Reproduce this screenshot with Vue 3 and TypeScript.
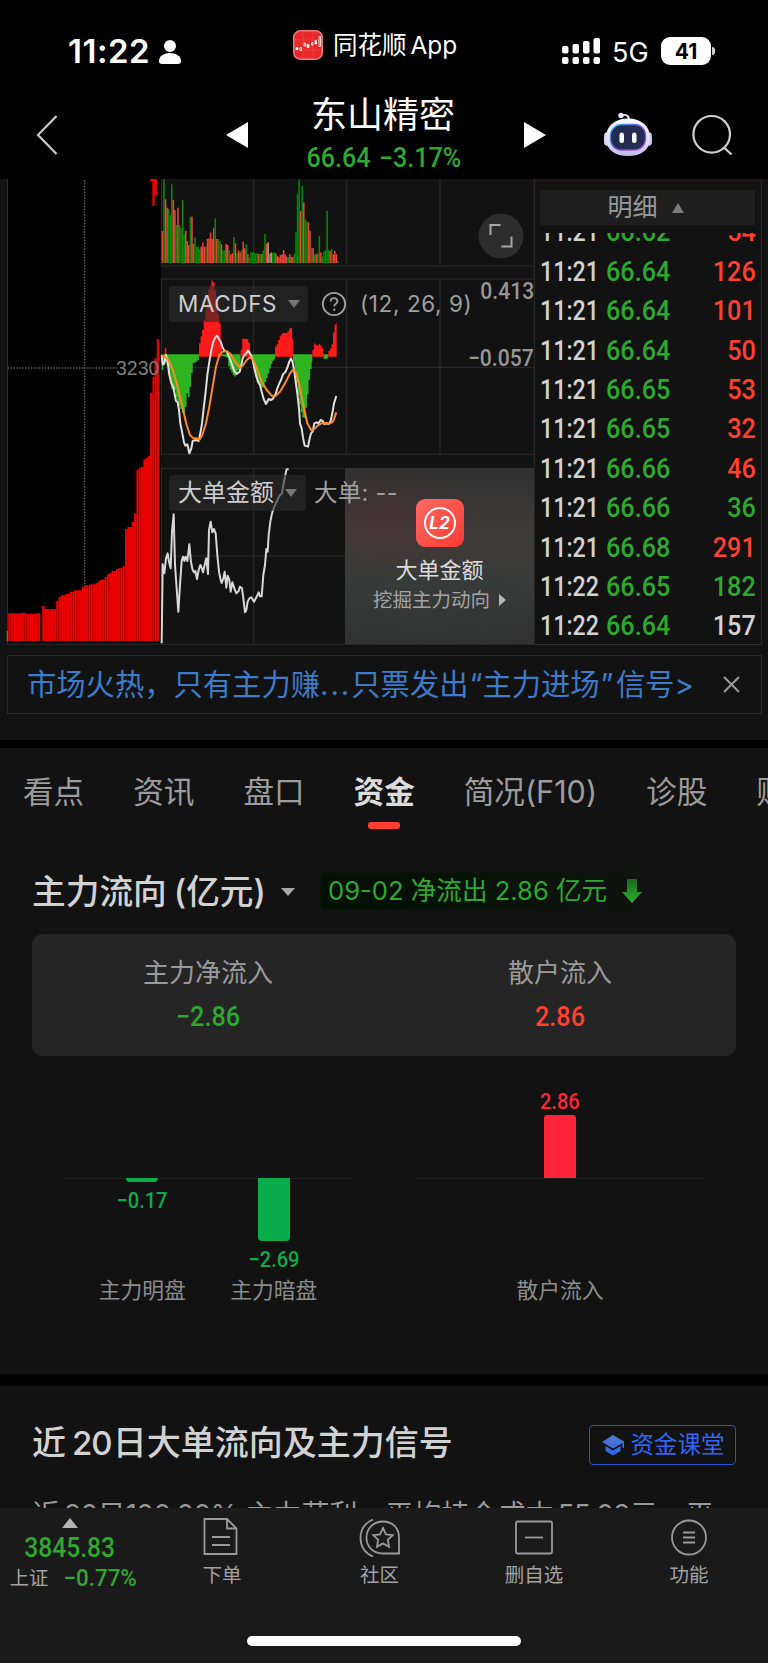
<script setup lang="ts">
type Point = [number, number]
interface Bar { x: number; y: number; h: number; tone: string }

/* Plot coordinates are in thirds of a pixel, the resolution of the device. */
const PITCH = 4.66

const volumeSource =
  'r168 g12 r73 r98 g102 g120 g28 r75 r105 g150 r98 g150 g158 g75 g178 r168 r198 r210 g125 r125 r207 g188 g215 g215 g224 r215 r202 r215 g215 r192 ' +
  'r190 r173 r192 r160 g130 r192 g192 g198 r208 g226 g226 r207 r210 g226 r238 r235 g186 r205 g235 r226 r232 g226 r200 r220 g208 r238 g248 g232 g232 g232 ' +
  'g235 g235 r237 g237 r237 g226 g177 r207 w202 r237 w233 g233 g232 r235 r243 r246 r240 r238 r225 r238 r245 g246 r238 r246 r246 g236 g172 g58 g13 r108 ' +
  'g33 r82 g133 g140 r142 r167 g218 r219 g238 r238 g235 g183 r232 g245 g230 g226 g108 g225 r228 g222 r238 r228 r238 g258'

const volumeBars: Bar[] = volumeSource.split(' ').map((s, i) => {
  const top = Number(s.slice(1))
  return { x: 485 + i * PITCH, y: top, h: 264 - top, tone: s[0] }
})

function parse(source: string): Point[] {
  return source.split(' ').map((p) => p.split(',').map(Number) as Point)
}

/* Stepped area between a base line and the sampled outline. */
function steps(source: string, base: number): string {
  const pts = parse(source)
  const last = pts[pts.length - 1][0]
  let d = `M${pts[0][0]} ${base}`
  for (let x = pts[0][0]; x < last; x += PITCH) {
    let k = 0
    while (k < pts.length - 2 && pts[k + 1][0] <= x) k++
    const [x0, y0] = pts[k]
    const [x1, y1] = pts[k + 1]
    const y = y0 + ((y1 - y0) * (x - x0)) / (x1 - x0)
    const end = Math.min(x + PITCH, last)
    d += `V${y.toFixed(1)}H${end.toFixed(1)}`
  }
  return d + `V${base}Z`
}

const rising = [
  '494,520 499,520',
  '597,505 600,490 605,472 609,450 613,420 617,395 620,375 624,345 628,332 632,332 635,313 638,318 641,332 646,360 650,390 653,418 657,440 660,470 663,510 666,535',
  '722,525 727,488 732,493 738,490 743,495 748,515 752,538',
  '825,515 830,507 838,485 845,475 850,473 860,475 865,462 872,458 876,488 879,515',
  '937,525 941,505 946,510 952,513 956,507 962,513 967,525 971,538',
  '985,528 990,520 994,510 997,490 1001,455 1006,443 1010,443',
].map((s) => steps(s, 545))

const falling = [
  '485,585 490,570 497,555 502,590 508,610 510,640 522,645 530,680 540,700 547,717 552,712 556,690 558,655 562,655 566,675 570,620 574,590 577,565 588,560 595,552 597,548',
  '666,543 680,548 685,575 692,590 698,600 704,605 710,590 718,575 722,560',
  '752,545 760,575 765,605 772,625 780,635 788,640 795,618 802,600 808,580 815,560 825,548',
  '879,560 886,600 890,640 896,680 900,700 905,725 910,732 914,725 917,690 922,650 927,600 932,572 937,550',
  '971,552 980,550 985,545',
].map((s) => steps(s, 538))

const difLine =
  '485,540 488,568 493,565 498,540 503,560 508,600 514,625 520,635 522,648 528,678 533,682 537,705 541,745 547,775 552,802 556,812 562,808 568,835 574,820 578,798 588,795 596,798 601,775 606,745 611,700 617,650 622,600 628,560 635,520 640,500 646,487 651,482 657,492 662,500 667,515 673,527 680,530 687,545 693,560 698,575 704,590 710,597 719,590 724,570 728,550 734,540 740,533 744,527 750,535 757,550 762,575 768,600 774,620 780,630 785,650 791,672 798,687 806,672 812,675 818,672 826,660 832,640 838,625 843,615 849,598 857,590 863,575 868,560 873,550 878,562 883,590 887,620 892,655 897,700 900,745 905,760 909,788 914,812 924,815 928,795 933,775 938,770 943,745 950,742 956,745 962,735 968,738 973,747 980,745 986,747 992,738 997,715 1002,685 1009,663'
const deaLine =
  '485,543 495,546 502,550 510,565 520,590 530,625 540,665 550,708 560,750 570,780 580,790 590,790 598,795 607,780 618,745 628,695 638,635 648,575 658,540 668,530 680,528 692,538 705,560 720,578 730,570 740,555 750,547 760,555 770,580 785,620 800,645 815,662 828,662 840,650 855,625 870,595 880,583 888,592 900,640 912,700 922,745 935,767 945,760 955,750 965,745 980,745 992,745 1000,738 1009,712'
const orderLine = parse(
  '485,565 488,328 493,355 498,310 503,295 507,320 512,340 516,230 521,178 525,330 530,400 535,470 540,390 545,318 549,305 553,318 557,305 562,318 568,268 573,322 578,345 582,352 586,348 591,372 596,345 601,330 605,338 609,352 614,330 619,310 624,357 627,225 632,200 637,232 642,222 647,235 652,300 657,350 662,375 665,384 670,370 674,350 679,398 683,362 688,375 692,410 697,382 703,400 709,415 716,408 720,395 726,400 730,430 735,472 739,465 743,440 748,430 754,427 762,440 770,425 776,412 780,424 785,424 790,360 795,330 799,282 803,290 806,240 811,200 816,175 823,155 830,140 837,125 842,118 846,115 850,90 854,70 858,50 860,43 866,43',
)
  .map(([x, y]) => `${x},${y + 840}`)
  .join(' ')

/* [start x, top] of each plateau of the index chart. */
const indexSteps: Point[] = [
  [24, 1315], [66, 1313], [78, 1316], [106, 1315], [121, 1398], [126, 1293], [134, 1302], [168, 1277], [175, 1265], [182, 1261], [195, 1257],
  [209, 1250], [222, 1246], [246, 1235], [254, 1231], [268, 1228], [286, 1224], [293, 1219], [300, 1214], [314, 1206], [321, 1198], [328, 1193],
  [335, 1188], [348, 1182], [356, 1179], [368, 1173], [375, 1062], [382, 1056], [395, 1041], [402, 1015], [409, 884], [416, 879], [423, 875],
  [430, 853], [437, 849], [444, 842], [450, 653], [457, 605], [463, 550], [470, 493], [477, 1398],
]
const indexArea =
  'M24 1398' + indexSteps.map(([x, y]) => `H${x}V${y}`).join('') + 'Z'

const trades = [
  { time: '11:21', price: '66.62', vol: '54', tone: 'up' },
  { time: '11:21', price: '66.64', vol: '126', tone: 'up' },
  { time: '11:21', price: '66.64', vol: '101', tone: 'up' },
  { time: '11:21', price: '66.64', vol: '50', tone: 'up' },
  { time: '11:21', price: '66.65', vol: '53', tone: 'up' },
  { time: '11:21', price: '66.65', vol: '32', tone: 'up' },
  { time: '11:21', price: '66.66', vol: '46', tone: 'up' },
  { time: '11:21', price: '66.66', vol: '36', tone: 'down' },
  { time: '11:21', price: '66.68', vol: '291', tone: 'up' },
  { time: '11:22', price: '66.65', vol: '182', tone: 'down' },
  { time: '11:22', price: '66.64', vol: '157', tone: 'flat' },
]

const tabs = ['看点', '资讯', '盘口', '资金', '简况(F10)', '诊股', '财务']
const activeTab = '资金'
</script>

<template>
  <div class="screen">
    <div class="status">
      <div class="clock">11:22</div>
      <svg class="person" width="24" height="26" viewBox="0 0 24 26"><circle cx="12" cy="7" r="6" /><path d="M1 22c0-5 5-8 11-8s11 3 11 8c0 2-1 3-3 3H4c-2 0-3-1-3-3z" /></svg>
      <div class="return">
        <svg width="30" height="30" viewBox="0 0 30 30">
          <rect x=".8" y=".8" width="28.4" height="28.4" rx="6.5" fill="#e8292b" stroke="#f37b78" stroke-width="1.5" />
          <path d="M2 10h26M2 20h26M10 2v26M20 2v26" stroke="#f04a48" stroke-width=".5" />
          <path d="M3 17.500h2v2H3zM14 14.500h2v3h-2zM22 10.500h1.500v3.500H22z" fill="#fff" stroke="#fff" stroke-width=".8" />
          <path d="M7 17.500h1.500v3H7zM11 13h1.500v3H11zM18.500 12.500H20V15h-1.500zM26 6.500h1.500v10H26z" fill="none" stroke="#fff" stroke-width=".8" />
        </svg>
        <span>同花顺</span><span class="app-word">App</span>
      </div>
      <svg class="signal" width="40" height="28" viewBox="0 0 40 28">
        <rect x="1" y="9" width="6.500" height="7.500" rx="2" /><rect x="11.500" y="7" width="6.500" height="9.500" rx="2" /><rect x="22" y="4" width="6.500" height="12.500" rx="2" /><rect x="32.500" y="1" width="6.500" height="15.500" rx="2" />
        <rect x="1" y="20" width="6.500" height="7" rx="2" /><rect x="11.500" y="20" width="6.500" height="7" rx="2" /><rect x="22" y="20" width="6.500" height="7" rx="2" /><rect x="32.500" y="20" width="6.500" height="7" rx="2" />
      </svg>
      <div class="net">5G</div>
      <div class="battery">41</div>
      <div class="nub"></div>
    </div>

    <header class="header">
      <svg class="back" width="24" height="42" viewBox="0 0 24 42"><path d="M21.500 2 3 21l18.500 19" fill="none" stroke="#c9c9c9" stroke-width="2.200" /></svg>
      <svg class="prev" width="22" height="26" viewBox="0 0 22 26"><path d="M22 0v26L0 13z" fill="#fff" /></svg>
      <div class="stock">
        <div class="stock-name">东山精密</div>
        <div class="stock-quote num"><span>66.64</span><span>−3.17%</span></div>
      </div>
      <svg class="next" width="22" height="26" viewBox="0 0 22 26"><path d="M0 0v26l22-13z" fill="#fff" /></svg>
      <svg class="robot" width="50" height="46" viewBox="0 0 50 46">
        <defs>
          <linearGradient id="shell" x1="0" y1="0" x2="0" y2="1"><stop offset="0" stop-color="#fafaff" /><stop offset=".7" stop-color="#dcdaf6" /><stop offset="1" stop-color="#b9b6e6" /></linearGradient>
          <linearGradient id="glow" x1="0" y1="0" x2="1" y2="1"><stop offset="0" stop-color="#31c4e8" /><stop offset=".5" stop-color="#7b3fe0" /><stop offset="1" stop-color="#a255f0" /></linearGradient>
        </defs>
        <path d="M18 4.500c5-1.500 8-.5 8 5" fill="none" stroke="#e4e3fa" stroke-width="2" /><circle cx="18" cy="4.500" r="2.700" fill="#e4e3fa" />
        <rect x="1" y="21" width="8" height="14" rx="4" fill="#d6d4f3" /><rect x="41" y="21" width="8" height="14" rx="4" fill="#c7c4ec" />
        <path d="M25 7.500c14 0 22 8 22 19.500 0 12-9 18-22 18S3 39 3 27C3 15.500 11 7.500 25 7.500z" fill="url(#shell)" />
        <rect x="7.500" y="13.500" width="35" height="25.500" rx="11" fill="#242c52" stroke="url(#glow)" stroke-width="1.300" />
        <rect x="16.500" y="21.500" width="4.500" height="10.500" rx="2.200" fill="#fff" /><rect x="29" y="21.500" width="4.500" height="10.500" rx="2.200" fill="#fff" />
      </svg>
      <svg class="search" width="42" height="42" viewBox="0 0 42 42" fill="none" stroke="#cfcfcf" stroke-width="2.200"><circle cx="20.700" cy="20.300" r="18.300" /><path d="m32.500 33 8 7.500" /></svg>
    </header>

    <section class="market">
      <div class="plots">
        <svg class="plot" width="535" height="466" viewBox="0 12 1605 1398">
          <defs>
            <pattern id="stripe" width="6.850" height="10" patternUnits="userSpaceOnUse" x="24"><rect width="6.850" height="10" fill="#f20000" /><rect width="2.300" height="10" fill="#b00000" /></pattern>
          </defs>
          <rect x="0" y="12" width="482" height="1395" fill="#121212" />
          <rect x="24" y="12" width="458" height="1392" fill="#000" />
          <path d="M22.500 12V1408" stroke="#303030" stroke-width="3" />
          <path d="M22 1408H1605" stroke="#2c2c2c" stroke-width="3" />
          <path d="M254 16V1402M24 579H350" stroke="#6a6a6a" stroke-width="4" stroke-dasharray="4 4.500" fill="none" />
          <path :d="indexArea" fill="url(#stripe)" />
          <path d="M450 12h21v48h-7v33h-7V18h-7z" fill="#e60000" />
          <path d="M20 1368h4v30h-4z" fill="#23a023" />

          <g class="grid" fill="none" stroke="#2b2b2b" stroke-width="3">
            <path d="M484.500 12V273H1603M761 12V273M1040 12V273M1320 12V273" />
            <path d="M484.500 312H1603M484.500 312V838H1603M761 312V838M1040 312V838M1320 312V838M484 577H1603" />
            <path d="M484.500 880H1603M484.500 880V1406M761 880V1406M1040 880V1406M484 1143H1040" />
            <path d="M1603 12V1408" />
          </g>

          <g>
            <rect v-for="(b, i) in volumeBars" :key="i" :x="b.x" :y="b.y" width="4.660" :height="b.h" :class="'vol-' + b.tone" />
          </g>

          <path v-for="(d, i) in falling" :key="'f' + i" :d="d" fill="#2fb321" />
          <path v-for="(d, i) in rising" :key="'r' + i" :d="d" fill="#ff1a1a" />
          <polyline :points="difLine" class="curve" stroke="#e0e0e0" />
          <polyline :points="deaLine" class="curve" stroke="#ff8a22" />
          <polyline :points="orderLine" class="curve" stroke="#d8d8d8" />
        </svg>

        <div class="axis-price">3230</div>
        <div class="chip chip-macd"><span class="latin">MACDFS</span><i class="caret"></i></div>
        <svg class="help" width="26" height="26" viewBox="0 0 26 26"><circle cx="13" cy="13" r="11.200" fill="none" stroke="#a0a0a0" stroke-width="1.800" /><path d="M9.700 10.500c0-4.400 6.700-4.300 6.700-.3 0 2.600-3.200 2.600-3.200 5.200" fill="none" stroke="#a0a0a0" stroke-width="1.800" /><circle cx="13.200" cy="18.600" r="1.200" fill="#a0a0a0" /></svg>
        <div class="params">(12, 26, 9)</div>
        <div class="scale-top num">0.413</div>
        <div class="scale-mid num">−0.057</div>
        <svg class="expand" width="46" height="46" viewBox="0 0 46 46"><circle cx="23" cy="23" r="22.500" fill="#2d2d2d" /><path d="M12.500 22v-10h10M33.500 23.500v10h-10" fill="none" stroke="#a6a6a6" stroke-width="2" /></svg>

        <div class="promo">
          <svg class="l2" width="48" height="48" viewBox="0 0 48 48">
            <defs><linearGradient id="l2fill" x1="0" y1="0" x2="1" y2="1"><stop offset="0" stop-color="#ff6a63" /><stop offset="1" stop-color="#fb3a33" /></linearGradient></defs>
            <rect width="48" height="48" rx="9" fill="url(#l2fill)" /><circle cx="24" cy="24" r="15" fill="none" stroke="#fff" stroke-width="2" />
            <text x="23.500" y="30" text-anchor="middle" class="l2-text">L2</text>
          </svg>
          <div class="promo-title">大单金额</div>
          <div class="promo-sub"><span>挖掘主力动向</span><svg width="7" height="12" viewBox="0 0 7 12"><path d="M0 0v12l7-6z" fill="#b8b8b8" /></svg></div>
        </div>
        <div class="chip chip-order"><span>大单金额</span><i class="caret"></i></div>
        <div class="order-value">大单: --</div>
      </div>

      <div class="tape">
        <div class="tape-head"><span>明细</span><i class="caret-up"></i></div>
        <div class="tape-body">
          <div v-for="(t, i) in trades" :key="i" class="trade num">
            <span class="t-time">{{ t.time }}</span><span class="t-price">{{ t.price }}</span><span class="t-vol" :class="t.tone">{{ t.vol }}</span>
          </div>
        </div>
      </div>
    </section>

    <div class="notice">
      <span>市场火热，只有主力赚<b class="dots">...</b>只票发出<b class="open">“</b>主力进场<b class="close">”</b>信号&gt;</span>
      <svg width="17" height="17" viewBox="0 0 17 17"><path d="m1 1 15 15M16 1 1 16" stroke="#9a9a9a" stroke-width="2" /></svg>
    </div>

    <nav class="tabs">
      <div v-for="t in tabs" :key="t" class="tab" :class="{ active: t === activeTab }">{{ t }}</div>
    </nav>

    <section class="flow">
      <div class="flow-head">
        <h2>主力流向<span class="unit">(亿元)</span></h2>
        <i class="caret small"></i>
        <div class="flow-tag"><span>09-02 净流出 2.86 亿元</span>
          <svg width="20" height="24" viewBox="0 0 20 24"><defs><linearGradient id="arrow" x1="0" y1="0" x2="0" y2="1"><stop offset="0" stop-color="#1c6a1c" /><stop offset="1" stop-color="#2fae2f" /></linearGradient></defs><path d="M5 1q0-1 1-1h8q1 0 1 1v12h5L10 24 0 13h5z" fill="url(#arrow)" /></svg>
        </div>
      </div>

      <div class="summary">
        <div class="sum-cell"><div class="sum-label">主力净流入</div><div class="sum-value num green">−2.86</div></div>
        <div class="sum-cell"><div class="sum-label">散户流入</div><div class="sum-value num red">2.86</div></div>
      </div>

      <div class="bars">
        <div class="bar-group">
          <div class="bar-col neg">
            <div class="upper"></div>
            <div class="lower"><div class="bar tiny"></div><div class="bar-num num">−0.17</div></div>
            <div class="bar-name">主力明盘</div>
          </div>
          <div class="bar-col neg">
            <div class="upper"></div>
            <div class="lower"><div class="bar full"></div><div class="bar-num num">−2.69</div></div>
            <div class="bar-name">主力暗盘</div>
          </div>
        </div>
        <div class="bar-group">
          <div class="bar-col pos">
            <div class="upper"><div class="bar-num num">2.86</div><div class="bar full"></div></div>
            <div class="lower"></div>
            <div class="bar-name">散户流入</div>
          </div>
        </div>
      </div>
    </section>

    <section class="signals">
      <div class="signals-head">
        <h2>近<span class="twenty">20</span>日大单流向及主力信号</h2>
        <div class="class-btn">
          <svg width="22" height="21" viewBox="0 0 22 21"><defs><linearGradient id="cap" x1="0" y1="0" x2="0" y2="1"><stop offset="0" stop-color="#5479cf" /><stop offset="1" stop-color="#2b62ef" /></linearGradient></defs><path d="M11 0 22 6.500V13h-1.500V8L11 13.500 0 7z M3.500 11l7.500 4.500 7.500-4.500v5L11 20.500 3.500 16z" fill="url(#cap)" /></svg>
          <span>资金课堂</span>
        </div>
      </div>
      <div class="signals-text">近<span>20</span>日<span class="tight">100.00%</span> 主力获利，平均持仓成本<span>55.02</span>元，平</div>
    </section>

    <footer class="dock">
      <div class="dock-row">
        <div class="index">
          <i class="caret-up light"></i>
          <div class="index-value num">3845.83</div>
          <div class="index-line"><span>上证</span><span class="num">−0.77%</span></div>
        </div>
        <div class="dock-item">
          <svg width="40" height="40" viewBox="0 0 40 40"><path d="M2.500 2h22.500l9.500 9.500v25.500h-32zM25 2v9.500h9.500M10 20h18M10 28h18" /></svg>
          <span>下单</span>
        </div>
        <div class="dock-item nudge">
          <svg width="42" height="40" viewBox="0 0 42 40"><path d="M40 36.500V20.500C40 11 33.500 4.500 24 4.500S7.500 11.500 7.500 20.800 14.500 36.500 24 36.500z" /><path d="M14 2.500C6 6 1.500 13 1.500 21S6 36 14 39.500" /><path d="m24 11 3 6.300 6.700.9-4.900 4.700 1.200 6.800-6-3.300-6 3.300 1.200-6.800-4.900-4.700 6.700-.9z" /></svg>
          <span>社区</span>
        </div>
        <div class="dock-item">
          <svg width="40" height="40" viewBox="0 0 40 40"><rect x="2" y="4.500" width="36" height="32" rx="1.500" /><path d="M11 20.500h18" /></svg>
          <span>删自选</span>
        </div>
        <div class="dock-item last">
          <svg width="40" height="40" viewBox="0 0 40 40"><circle cx="20" cy="20.500" r="17" /><path d="M14 15.500h12M14 20.500h12M14 25.500h12" /></svg>
          <span>功能</span>
        </div>
      </div>
      <div class="home"></div>
    </footer>
  </div>
</template>

<style>
body { background: #000; }
</style>

<style scoped>
.screen { width: 768px; height: 1663px; overflow: hidden; background: #121212; color: #d2d2d2; font-family: Inter, "Noto Sans CJK SC", sans-serif; display: flex; flex-direction: column; }
.screen * { box-sizing: border-box; }
svg { display: block; flex: none; }
h2 { margin: 0; font-weight: 500; }
.num { font-family: Roboto, sans-serif; font-weight: 500; }

.status { height: 90px; background: #000; color: #fff; display: flex; align-items: flex-start; flex: none; }
.clock { width: 90px; margin-left: 68px; margin-top: 31px; font-size: 33px; line-height: 41px; font-weight: 600; letter-spacing: .5px; }
.person { margin-top: 39px; fill: #fff; }
.return { display: flex; align-items: center; margin-left: 111px; margin-top: 30px; height: 30px; width: 270px; font-size: 24.500px; line-height: 30px; white-space: nowrap; }
.return svg { margin-right: 10px; }
.app-word { margin-left: 4px; font-size: 24.400px; }
.signal { margin-top: 37px; margin-left: -2px; fill: #fff; }
.net { margin-left: 11px; width: 38px; margin-top: 36px; font-size: 27px; line-height: 33px; }
.battery { margin-left: 11px; width: 50px; height: 28px; margin-top: 37px; border-radius: 9px; background: #fff; color: #000; font-size: 21px; font-weight: 700; line-height: 29px; text-align: center; }
.nub { margin-left: 1px; margin-top: 47px; width: 3px; height: 8px; background: #cfcfcf; border-radius: 0 4px 4px 0; }

.header { height: 89px; background: #000; display: flex; align-items: flex-start; flex: none; }
.back { margin: 24px 0 0 35px; }
.prev { margin: 32px 0 0 167px; }
.stock { width: 272px; margin-left: 2px; text-align: center; padding-right: 6px; }
.stock-name { font-size: 36px; line-height: 46px; height: 48px; color: #fff; margin-top: 2px; }
.stock-quote { font-size: 27px; line-height: 36px; color: #2fa82f; display: flex; justify-content: center; gap: 9px; transform: scaleX(.93); padding-left: 2px; }
.next { margin: 32px 0 0 2px; }
.robot { margin: 21px 0 0 57px; }
.search { margin: 24px 0 0 37.500px; }

.market { height: 466px; display: flex; flex: none; }
.plots { position: relative; width: 535px; height: 466px; }
.curve { fill: none; stroke-width: 6; stroke-linejoin: round; }
.vol-r { fill: #ee4433; }
.vol-g { fill: #058a05; }
.vol-w { fill: #aaa; }
.axis-price { position: absolute; left: 116px; top: 177px; width: 44px; font: 19.500px/24px "Liberation Sans", sans-serif; color: #7c7c7c; }
.chip { position: absolute; left: 169px; height: 36px; border-radius: 4px; background: rgba(44, 44, 44, .62); display: flex; align-items: center; padding-left: 9px; color: #cfcfcf; font-size: 24px; line-height: 32px; }
.chip-macd { top: 107px; width: 139px; font-size: 22.500px; letter-spacing: .6px; }
.chip-order { top: 296px; width: 137px; }
.caret { width: 0; height: 0; border: 6px solid transparent; border-top: 8px solid #777; border-bottom: 0; margin-left: 11px; }
.help { position: absolute; left: 321px; top: 112px; }
.params { position: absolute; left: 360px; top: 111px; font-size: 22.500px; line-height: 28px; letter-spacing: .6px; color: #a0a0a0; white-space: nowrap; }
.scale-top, .scale-mid { position: absolute; right: 1px; font-size: 24px; line-height: 28px; color: #969696; transform: scaleX(.88); transform-origin: right; }
.scale-top { top: 98px; }
.scale-mid { top: 165px; }
.expand { position: absolute; left: 478px; top: 34px; }
.promo { position: absolute; left: 345px; top: 289px; width: 189px; height: 176px; display: flex; flex-direction: column; align-items: center; padding-top: 31px; background: radial-gradient(ellipse 90px 60px at 25% 30%, rgba(90, 40, 45, .3), transparent), radial-gradient(ellipse 120px 60px at 40% 80%, rgba(45, 65, 58, .2), transparent), linear-gradient(#303030, #3e3b3a 35%, #393a39 65%, #313131); }
.l2-text { font: italic 700 17px Inter, sans-serif; fill: #fff; }
.promo-title { margin-top: 7px; font-size: 22px; line-height: 32px; color: #dcdcdc; }
.promo-sub { display: flex; align-items: center; gap: 9px; font-size: 19.500px; line-height: 28px; color: #a4a4a4; }
.order-value { position: absolute; left: 314px; top: 299px; font-size: 23.500px; line-height: 30px; color: #a0a0a0; white-space: pre; letter-spacing: .3px; }

.tape { width: 227px; border-right: 1px solid #2c2c2c; border-bottom: 1px solid #2c2c2c; border-top: 3px solid #221313; display: flex; flex-direction: column; }
.tape-head { height: 35px; margin: 8px 6px 0 5px; background: #1e1e1e; display: flex; align-items: center; justify-content: center; gap: 14px; padding-right: 4px; color: #999; font-size: 25px; line-height: 35px; flex: none; }
.caret-up { width: 0; height: 0; border: 6.500px solid transparent; border-bottom: 10px solid #7a7a7a; border-top: 0; }
.tape-body { margin-top: 8px; height: 411px; overflow: hidden; display: flex; flex-direction: column; justify-content: flex-end; flex: none; }
.trade { height: 39.400px; flex: none; display: flex; align-items: center; font-size: 28px; line-height: 39px; padding: 0 5px; position: relative; top: 1.500px; }
.trade span { transform: scaleX(.9); transform-origin: left; }
.trade .t-time { width: 65.500px; color: #d2d2d2; transform: scaleX(.83); }
.t-price { color: #2fa82f; }
.trade .t-vol { margin-left: auto; transform-origin: right; }
.up { color: #ff4030; }
.down { color: #2fa82f; }
.flat { color: #d2d2d2; }

.notice { margin: 10px 6px 0 7px; height: 59px; flex: none; border: 1.500px solid #2a2a2a; display: flex; align-items: center; justify-content: space-between; padding: 0 21px 0 19px; font-size: 29.300px; line-height: 40px; color: #3d7cc9; white-space: nowrap; }
.notice b { font-weight: 400; }
.dots { letter-spacing: 2px; }
.open { margin-left: 1px; }
.close { margin: 0 2.500px 0 1px; }

.tabs { margin-top: 26px; border-top: 8px solid #000; height: 97px; flex: none; display: flex; gap: 49px; padding: 23px 0 0 23px; overflow: hidden; font-size: 30.600px; line-height: 42px; color: #9c9c9c; white-space: nowrap; }
.tab { flex: none; position: relative; }
.tab.active { color: #dcdcdc; font-weight: 700; }
.tab.active::after { content: ""; position: absolute; left: 50%; margin-left: -16px; top: 51px; width: 32px; height: 7px; border-radius: 3px; background: #ff3d2e; }

.flow { height: 537px; flex: none; padding: 0 32px; }
.flow-head { padding-top: 32px; display: flex; align-items: center; height: 78px; }
.flow-head h2 { font-size: 33.700px; line-height: 46px; white-space: nowrap; }
.unit { margin-left: 7px; }
.caret.small { border-width: 8px 7px 0; border-top-color: #a5a5a5; margin-left: 15px; }
.flow-tag { margin-left: 25px; width: 334px; height: 38px; border-radius: 4px; background: linear-gradient(90deg, #041004, #0a140a 60%, #121212); border: 1px solid #0c140c; padding-left: 7px; display: flex; align-items: center; gap: 15px; color: #2fa82f; font-size: 25.600px; line-height: 36px; white-space: nowrap; position: relative; top: -1px; }
.summary { margin-top: 18.500px; height: 122px; border-radius: 11px; background: #252525; display: grid; grid-template-columns: 1fr 1fr; text-align: center; padding-top: 20px; }
.sum-label { font-size: 26px; line-height: 38px; color: #9a9a9a; }
.sum-value { font-size: 28px; line-height: 34px; margin-top: 8.500px; transform: scaleX(.9); }
.green { color: #2fa82f; }
.red { color: #ff4030; }
.bars { display: grid; grid-template-columns: 1fr 1fr; }
.bar-group { display: flex; margin: 0 32px; position: relative; justify-content: center; }
.bar-group::before { content: ""; position: absolute; left: 0; right: 0; top: 122px; height: 1px; background: #1f1f1f; }
.bar-col { width: 131.500px; display: flex; flex-direction: column; align-items: center; position: relative; }
.upper { height: 122px; display: flex; flex-direction: column; justify-content: flex-end; align-items: center; }
.lower { height: 97px; display: flex; flex-direction: column; align-items: center; }
.neg { color: #09ad4b; }
.pos { color: #ff2338; }
.bar { width: 32px; background: currentColor; flex: none; }
.neg .bar { border-radius: 0 0 4px 4px; }
.pos .bar { border-radius: 3px 3px 0 0; }
.tiny { height: 4px; }
.full { height: 63px; }
.bar-num { font-size: 22px; line-height: 26px; transform: scaleX(.91); }
.lower .bar-num { margin-top: 6px; }
.bar-name { font-size: 21.800px; line-height: 30px; color: #8c8c8c; }

.signals { border-top: 12px solid #000; height: 134px; flex: none; overflow: hidden; padding: 39px 32px 0; }
.signals-head { display: flex; justify-content: space-between; align-items: center; height: 40px; }
.signals-head h2 { font-size: 34px; line-height: 46px; white-space: nowrap; margin-top: -4px; }
.twenty { margin: 0 1px 0 6px; font-size: 33px; letter-spacing: -1px; }
.class-btn { width: 147.500px; height: 40px; border: 1.500px solid #2a55c8; border-radius: 4px; display: flex; align-items: center; padding-left: 12px; gap: 7px; color: #2f66f5; font-size: 23.500px; line-height: 36px; }
.signals-text { margin-top: 29px; font-size: 28px; line-height: 42px; color: #999; white-space: nowrap; }
.signals-text span { margin-left: 4px; letter-spacing: -.6px; }
.signals-text .tight { margin-left: 0; }

.dock { height: 155px; flex: none; background: #1a1a1a; color: #a2a2a2; display: flex; flex-direction: column; align-items: center; }
.dock-row { height: 128px; width: 768px; display: grid; grid-template-columns: 144px repeat(4, 156px); }
.index { display: flex; flex-direction: column; align-items: center; padding: 10px 5px 0 0; }
.caret-up.light { border: 8.500px solid transparent; border-bottom: 10px solid #b4b4b4; border-top: 0; }
.index-value { font-size: 28px; line-height: 34px; margin-top: 3px; color: #2fa82f; transform: scaleX(.88); }
.index-line { display: flex; align-items: center; justify-content: space-between; width: 127px; margin: -1px -4px 0 3px; line-height: 28px; font-size: 19.500px; }
.index-line .num { color: #2fa82f; font-size: 24px; transform: scaleX(.93); transform-origin: right; }
.dock-item { display: flex; flex-direction: column; align-items: center; padding-top: 9px; font-size: 19.500px; line-height: 28px; }
.dock-item svg { fill: none; stroke: #9a9a9a; stroke-width: 1.800; height: 40px; margin-bottom: 4px; }
.nudge { padding-left: 3px; }
.last { padding-right: 2px; }
.home { width: 274px; height: 10px; border-radius: 5px; background: #fff; }
</style>
